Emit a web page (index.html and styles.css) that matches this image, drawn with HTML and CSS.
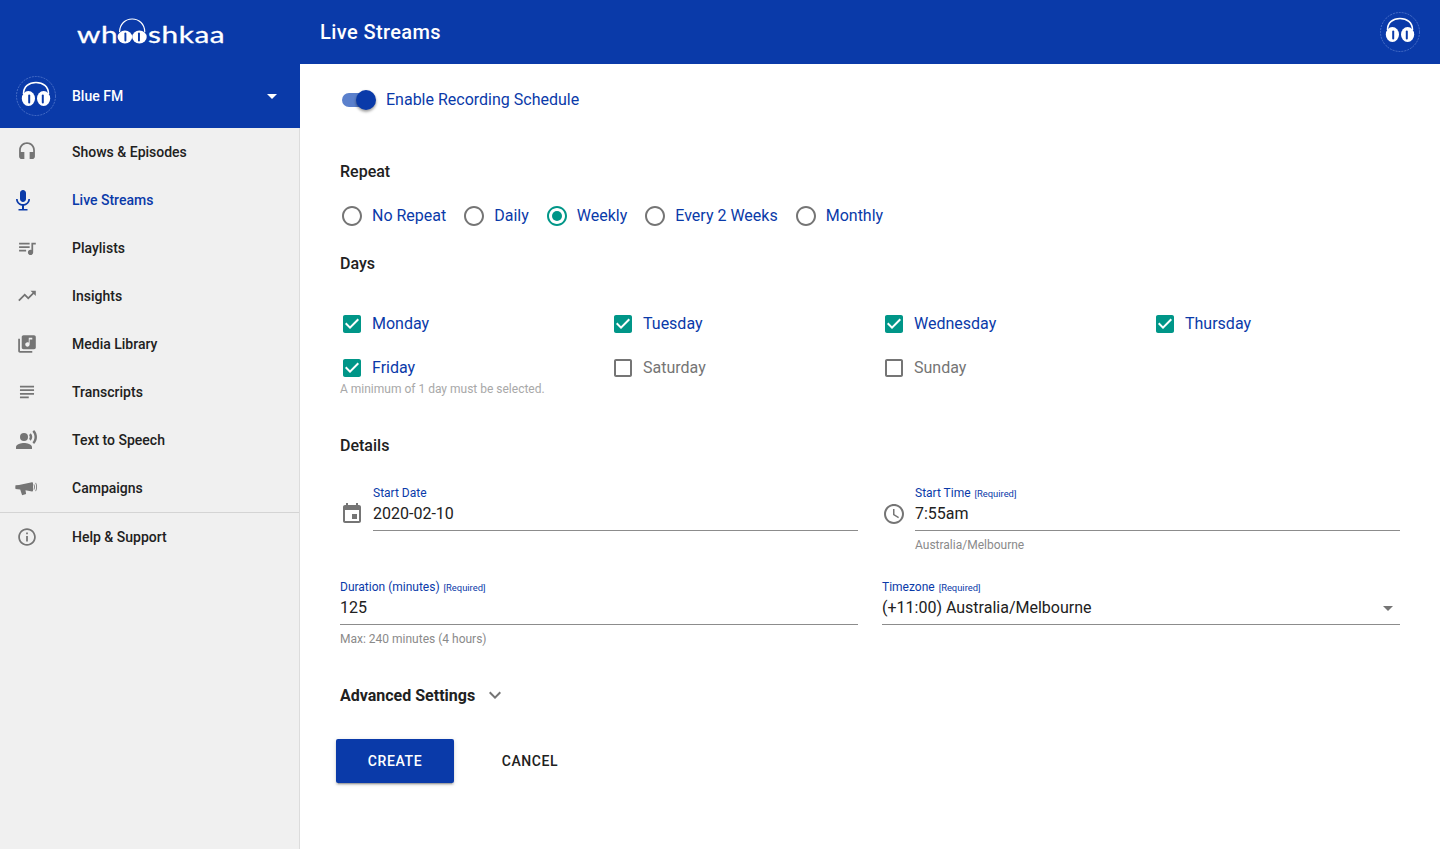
FILE: index.html
```html
<!DOCTYPE html>
<html lang="en">
<head>
<meta charset="utf-8">
<title>Live Streams</title>
<link rel="stylesheet" href="styles.css">
</head>
<body>
<svg class="sprite" width="0" height="0">
  <symbol id="i-headset" viewBox="0 0 24 24"><path d="M12 1c-4.97 0-9 4.03-9 9v7c0 1.66 1.34 3 3 3h3v-8H5v-2c0-3.87 3.13-7 7-7s7 3.13 7 7v2h-4v8h3c1.66 0 3-1.34 3-3v-7c0-4.97-4.03-9-9-9z"/></symbol>
  <symbol id="i-mic" viewBox="0 0 24 24"><path d="M12 14c1.66 0 2.99-1.34 2.99-3L15 5c0-1.66-1.34-3-3-3S9 3.34 9 5v6c0 1.66 1.34 3 3 3zm5.3-3c0 3-2.54 5.1-5.3 5.1S6.7 14 6.7 11H5c0 3.41 2.72 6.23 6 6.72V21H7.500v1.500h9V21H13v-3.280c3.280-.48 6-3.300 6-6.720h-1.700z"/></symbol>
  <symbol id="i-queue" viewBox="0 0 24 24"><path d="M15 6H3v2h12V6zm0 4H3v2h12v-2zM3 16h8v-2H3v2zM17 6v8.180c-.31-.11-.65-.18-1-.18-1.660 0-3 1.340-3 3s1.340 3 3 3 3-1.340 3-3V8h3V6h-5z"/></symbol>
  <symbol id="i-trend" viewBox="0 0 24 24"><path d="M16 6l2.290 2.290-4.880 4.880-4-4L2 16.590 3.410 18l6-6 4 4 6.300-6.290L22 12V6z"/></symbol>
  <symbol id="i-library" viewBox="0 0 24 24"><path d="M20 2H8c-1.100 0-2 .9-2 2v12c0 1.100.9 2 2 2h12c1.100 0 2-.9 2-2V4c0-1.100-.9-2-2-2zm-2 5h-3v5.500c0 1.380-1.120 2.500-2.500 2.500S10 13.880 10 12.500s1.120-2.500 2.500-2.500c.57 0 1.080.19 1.500.51V5h4v2zM4 6H2v14c0 1.100.9 2 2 2h14v-2H4V6z"/></symbol>
  <symbol id="i-notes" viewBox="0 0 24 24"><path d="M14 17H4v2h10v-2zm6-8H4v2h16V9zM4 15h16v-2H4v2zM4 5v2h16V5H4z"/></symbol>
  <symbol id="i-voice" viewBox="0 0 24 24"><circle cx="9" cy="9" r="4"/><path d="M9 15c-2.670 0-8 1.340-8 4v2h16v-2c0-2.660-5.330-4-8-4zm6.760-9.640l-1.680 1.690c.84 1.180.84 2.710 0 3.890l1.680 1.690c2.020-2.020 2.020-5.070 0-7.270zM19.070 2l-1.630 1.630c2.770 3.020 2.770 7.560 0 10.740L19.070 16c3.900-3.890 3.910-9.950 0-14z"/></symbol>
  <symbol id="i-campaign" viewBox="0 0 24 24"><path d="M.5 9.200l3.500-.3L17 6.200c.6-.1 1 .3 1 .8v7.800c0 .5-.4.9-1 .8l-6.500-1.300.6 3.700-4 1.200-1.900-5.700-4.700-.4C.2 11.900.2 10.500.5 9.200zM19.200 8.200c.9 1.700.9 3.900 0 5.600l-.7-.4c.7-1.500.7-3.300 0-4.800zm1.800-1.500c1.400 2.600 1.400 6 0 8.600l-.7-.4c1.200-2.400 1.200-5.400 0-7.800z"/></symbol>
  <symbol id="i-info" viewBox="0 0 24 24"><path d="M11 7h2v2h-2zm0 4h2v6h-2zm1-9C6.480 2 2 6.480 2 12s4.480 10 10 10 10-4.480 10-10S17.520 2 12 2zm0 18c-4.410 0-8-3.590-8-8s3.590-8 8-8 8 3.590 8 8-3.590 8-8 8z"/></symbol>
  <symbol id="i-event" viewBox="0 0 24 24"><path d="M17 12h-5v5h5v-5zM16 1v2H8V1H6v2H5c-1.110 0-1.990.9-1.990 2L3 19c0 1.100.89 2 2 2h14c1.100 0 2-.9 2-2V5c0-1.100-.9-2-2-2h-1V1h-2zm3 18H5V8h14v11z"/></symbol>
  <symbol id="i-clock" viewBox="0 0 24 24"><path d="M11.990 2C6.470 2 2 6.480 2 12s4.470 10 9.990 10C17.520 22 22 17.520 22 12S17.520 2 11.990 2zM12 20c-4.420 0-8-3.580-8-8s3.580-8 8-8 8 3.580 8 8-3.580 8-8 8zm.5-13H11v6l5.250 3.150.75-1.230-4.500-2.670z"/></symbol>
  <symbol id="i-checked" viewBox="0 0 24 24"><path d="M19 3H5c-1.110 0-2 .9-2 2v14c0 1.100.89 2 2 2h14c1.110 0 2-.9 2-2V5c0-1.100-.89-2-2-2zm-9 14l-5-5 1.410-1.410L10 14.170l7.590-7.590L19 8l-9 9z"/></symbol>
  <symbol id="i-unchecked" viewBox="0 0 24 24"><path d="M19 5v14H5V5h14m0-2H5c-1.100 0-2 .9-2 2v14c0 1.100.9 2 2 2h14c1.100 0 2-.9 2-2V5c0-1.100-.9-2-2-2z"/></symbol>
  <symbol id="i-radio" viewBox="0 0 24 24"><path d="M12 2C6.480 2 2 6.480 2 12s4.480 10 10 10 10-4.480 10-10S17.520 2 12 2zm0 18c-4.420 0-8-3.580-8-8s3.580-8 8-8 8 3.580 8 8-3.580 8-8 8z"/></symbol>
  <symbol id="i-radio-on" viewBox="0 0 24 24"><path d="M12 2C6.480 2 2 6.480 2 12s4.480 10 10 10 10-4.480 10-10S17.520 2 12 2zm0 18c-4.420 0-8-3.580-8-8s3.580-8 8-8 8 3.580 8 8-3.580 8-8 8z"/><circle cx="12" cy="12" r="5"/></symbol>
  <symbol id="i-more" viewBox="0 0 24 24"><path d="M16.590 8.590L12 13.170 7.410 8.590 6 10l6 6 6-6z"/></symbol>
  <symbol id="i-drop" viewBox="0 0 24 24"><path d="M7 10l5 5 5-5z"/></symbol>
  <symbol id="i-brand" viewBox="0 0 40 40">
    <circle cx="20" cy="20" r="19.500" fill="none" stroke="#6f8fd8" stroke-width=".6" stroke-dasharray="2 1"/>
    <path d="M7.500 18C7.500 10.500 13 6.500 20 6.500S32.500 10.500 32.500 18" fill="none" stroke="#fff" stroke-width="1.600"/>
    <ellipse cx="12.400" cy="22.500" rx="6.600" ry="7.500" fill="#fff"/>
    <ellipse cx="27.600" cy="22.500" rx="6.600" ry="7.500" fill="#fff"/>
    <rect x="12.200" y="18.500" width="2" height="9" rx="1" fill="#0a3aa9"/>
    <rect x="25.800" y="18.500" width="2" height="9" rx="1" fill="#0a3aa9"/>
  </symbol>
</svg>

<header class="topbar">
  <div class="logo-wrap">
    <div class="logo">
      <span>wh</span>
      <svg class="logo-cups" viewBox="0 0 32 26" preserveAspectRatio="none">
        <path d="M3 14C3 6 9 1 16 1s13 5 13 13" fill="none" stroke="#fff" stroke-width="1.200"/>
        <ellipse cx="8.500" cy="19" rx="7.500" ry="6.500" fill="#fff"/>
        <ellipse cx="23.500" cy="19" rx="7.500" ry="6.500" fill="#fff"/>
        <rect x="8" y="14.500" width="2" height="9" rx="1" fill="#0a3aa9"/>
        <rect x="22" y="14.500" width="2" height="9" rx="1" fill="#0a3aa9"/>
      </svg>
      <span>shkaa</span>
    </div>
  </div>
  <h1 class="page-title">Live Streams</h1>
  <svg class="brand-avatar"><use href="#i-brand"/></svg>
</header>

<div class="layout">
  <aside class="sidebar">
    <div class="station">
      <svg class="brand-avatar"><use href="#i-brand"/></svg>
      <span class="station-name">Blue FM</span>
      <svg class="station-arrow"><use href="#i-drop"/></svg>
    </div>
    <nav class="nav">
      <a class="nav-item"><svg class="nav-icon nav-icon-sm"><use href="#i-headset"/></svg>Shows &amp; Episodes</a>
      <a class="nav-item is-active"><svg class="nav-icon nav-icon-mic"><use href="#i-mic"/></svg>Live Streams</a>
      <a class="nav-item"><svg class="nav-icon nav-icon-sm"><use href="#i-queue"/></svg>Playlists</a>
      <a class="nav-item"><svg class="nav-icon nav-icon-sm"><use href="#i-trend"/></svg>Insights</a>
      <a class="nav-item"><svg class="nav-icon nav-icon-sm"><use href="#i-library"/></svg>Media Library</a>
      <a class="nav-item"><svg class="nav-icon nav-icon-sm"><use href="#i-notes"/></svg>Transcripts</a>
      <a class="nav-item"><svg class="nav-icon"><use href="#i-voice"/></svg>Text to Speech</a>
      <a class="nav-item"><svg class="nav-icon"><use href="#i-campaign"/></svg>Campaigns</a>
    </nav>
    <div class="nav nav-footer">
      <a class="nav-item"><svg class="nav-icon nav-icon-sm"><use href="#i-info"/></svg>Help &amp; Support</a>
    </div>
  </aside>

  <main class="content">
    <div class="toggle-row">
      <span class="switch"><span class="switch-track"></span><span class="switch-thumb"></span></span>
      <span class="blue-label">Enable Recording Schedule</span>
    </div>

    <h2 class="heading heading-repeat">Repeat</h2>
    <div class="radios">
      <label class="choice"><svg class="ctl ctl-off"><use href="#i-radio"/></svg><span class="blue-label">No Repeat</span></label>
      <label class="choice"><svg class="ctl ctl-off"><use href="#i-radio"/></svg><span class="blue-label">Daily</span></label>
      <label class="choice"><svg class="ctl ctl-on"><use href="#i-radio-on"/></svg><span class="blue-label">Weekly</span></label>
      <label class="choice"><svg class="ctl ctl-off"><use href="#i-radio"/></svg><span class="blue-label">Every 2 Weeks</span></label>
      <label class="choice"><svg class="ctl ctl-off"><use href="#i-radio"/></svg><span class="blue-label">Monthly</span></label>
    </div>

    <h2 class="heading heading-days">Days</h2>
    <div class="days">
      <label class="choice"><svg class="ctl ctl-on"><use href="#i-checked"/></svg><span class="blue-label">Monday</span></label>
      <label class="choice"><svg class="ctl ctl-on"><use href="#i-checked"/></svg><span class="blue-label">Tuesday</span></label>
      <label class="choice"><svg class="ctl ctl-on"><use href="#i-checked"/></svg><span class="blue-label">Wednesday</span></label>
      <label class="choice"><svg class="ctl ctl-on"><use href="#i-checked"/></svg><span class="blue-label">Thursday</span></label>
      <label class="choice"><svg class="ctl ctl-on"><use href="#i-checked"/></svg><span class="blue-label">Friday</span></label>
      <label class="choice"><svg class="ctl ctl-off"><use href="#i-unchecked"/></svg><span class="grey-label">Saturday</span></label>
      <label class="choice"><svg class="ctl ctl-off"><use href="#i-unchecked"/></svg><span class="grey-label">Sunday</span></label>
    </div>
    <p class="helper helper-light">A minimum of 1 day must be selected.</p>

    <h2 class="heading heading-details">Details</h2>
    <div class="fields">
      <div class="field-group">
        <svg class="field-icon"><use href="#i-event"/></svg>
        <div class="field">
          <span class="field-label">Start Date</span>
          <span class="field-value">2020-02-10</span>
        </div>
      </div>
      <div class="field-group">
        <svg class="field-icon"><use href="#i-clock"/></svg>
        <div class="field">
          <span class="field-label">Start Time <small class="req">[Required]</small></span>
          <span class="field-value">7:55am</span>
          <p class="helper">Australia/Melbourne</p>
        </div>
      </div>
      <div class="field">
        <span class="field-label">Duration (minutes) <small class="req">[Required]</small></span>
        <span class="field-value">125</span>
        <p class="helper">Max: 240 minutes (4 hours)</p>
      </div>
      <div class="field">
        <span class="field-label">Timezone <small class="req">[Required]</small></span>
        <span class="field-value field-select">(+11:00) Australia/Melbourne<svg class="select-arrow"><use href="#i-drop"/></svg></span>
      </div>
    </div>

    <div class="advanced">
      <span>Advanced Settings</span>
      <svg class="advanced-icon"><use href="#i-more"/></svg>
    </div>

    <div class="actions">
      <button class="btn btn-primary">Create</button>
      <button class="btn btn-text">Cancel</button>
    </div>
  </main>
</div>
</body>
</html>
```
FILE: styles.css
```css
* { box-sizing: border-box; }
html, body { margin: 0; padding: 0; height: 100%; }
body {
  font-family: Roboto, "Liberation Sans", sans-serif;
  color: #212121;
  background: #fff;
  overflow: hidden;
}
.sprite { position: absolute; }

.topbar {
  display: flex;
  align-items: center;
  height: 64px;
  background: #0a3aa9;
  color: #fff;
  padding-right: 20px;
}
.logo-wrap { width: 300px; display: flex; padding-left: 77px; }
.logo {
  display: flex;
  align-items: flex-end;
  font-family: Lato, sans-serif;
  font-size: 24px;
  line-height: 30px;
  height: 30px;
  letter-spacing: 0.5px;
  color: #fff;
  -webkit-text-stroke: 0.3px #fff;
  margin-top: 3px;
  transform: scaleX(1.24);
  transform-origin: left center;
}
.logo-cups { width: 25px; height: 26px; flex: none; margin: 0 0 5px -1px; }
.page-title {
  flex: 1;
  margin: 0;
  font-size: 20px;
  font-weight: 500;
  letter-spacing: 0.4px;
  padding-left: 20px;
}
.brand-avatar { width: 40px; height: 40px; flex: none; }

.layout { display: flex; height: 785px; }
.sidebar {
  width: 300px;
  flex: none;
  background: #f0f0f0;
  border-right: 1px solid #dcdcdc;
}
.station {
  display: flex;
  align-items: center;
  height: 64px;
  background: #0a3aa9;
  color: #fff;
  padding-left: 16px;
  margin-right: -1px;
}
.station-name {
  flex: 1;
  margin-left: 16px;
  font-size: 14px;
  font-weight: 500;
}
.station-arrow { width: 24px; height: 24px; fill: #fff; margin-right: 16px; }
.nav-item {
  display: flex;
  align-items: center;
  height: 48px;
  padding-left: 15px;
  font-size: 14px;
  font-weight: 500;
  color: #212121;
}
.nav-icon {
  width: 24px;
  height: 24px;
  fill: #757575;
  flex: none;
  margin-right: 33px;
}
.nav-icon-sm { transform: scale(0.88); }
.nav-icon-mic { fill: #0a3aa9; transform: translateX(-4px); }
.is-active { color: #0a3aa9; }
.nav-footer { border-top: 1px solid #d4d4d4; }

.content { flex: 1; min-width: 0; padding: 24px 40px 0; }
.toggle-row { display: flex; align-items: center; height: 24px; gap: 10px; }
.switch { position: relative; display: block; width: 36px; height: 24px; }
.switch-track {
  position: absolute;
  left: 2px; top: 5px;
  width: 33px; height: 14px;
  border-radius: 7px;
  background: #5b80cc;
}
.switch-thumb {
  position: absolute;
  left: 16px; top: 2px;
  width: 20px; height: 20px;
  border-radius: 50%;
  background: #0a3aa9;
  box-shadow: 0 2px 3px rgba(0,0,0,.3), 0 1px 3px rgba(0,0,0,.15);
}
.blue-label, .grey-label { font-size: 16px; line-height: 24px; }
.blue-label { color: #0a3aa9; }
.grey-label { color: #757575; }

.heading {
  margin: 0;
  font-size: 16px;
  line-height: 24px;
  font-weight: 500;
  color: #212121;
}
.heading-repeat { margin-top: 48px; }
.heading-days { margin-top: 24px; }
.heading-details { margin-top: 37px; }

.choice { display: flex; align-items: center; gap: 8px; height: 24px; }
.ctl { width: 24px; height: 24px; flex: none; }
.ctl-on { fill: #009688; }
.ctl-off { fill: #757575; }
.radios { display: flex; gap: 16px; margin-top: 20px; }
.days {
  display: grid;
  grid-template-columns: repeat(4, 271px);
  row-gap: 20px;
  margin-top: 36px;
}
.helper {
  margin: 6px 0 0;
  font-size: 12px;
  line-height: 16px;
  color: #8a8a8a;
}
.helper-light { margin-top: 1px; color: #a8a8a8; }

.fields {
  display: grid;
  grid-template-columns: 1fr 1fr;
  column-gap: 24px;
  row-gap: 26px;
  margin-top: 27px;
}
.field-group { display: flex; gap: 9px; }
.field-icon { width: 24px; height: 24px; fill: #757575; flex: none; margin-top: 17px; }
.field { flex: 1; min-width: 0; }
.field-label {
  display: block;
  height: 16px;
  font-size: 12px;
  line-height: 16px;
  color: #0a3aa9;
  white-space: nowrap;
}
.req { font-size: 9.4px; margin-left: 1px; }
.field-value {
  display: block;
  position: relative;
  height: 30px;
  padding-top: 1px;
  font-size: 16px;
  line-height: 24px;
  color: #212121;
  border-bottom: 1px solid #8c8c8c;
}
.select-arrow {
  position: absolute;
  right: 0; top: 1px;
  width: 24px; height: 24px;
  fill: #757575;
}

.advanced {
  display: flex;
  align-items: center;
  gap: 8px;
  height: 24px;
  margin-top: 36px;
  font-size: 16px;
  font-weight: 700;
  color: #212121;
}
.advanced-icon { width: 24px; height: 24px; fill: #757575; }

.actions { display: flex; align-items: center; margin: 32px 0 0 -4px; }
.btn {
  height: 44px;
  border: 0;
  border-radius: 2px;
  font-family: inherit;
  font-size: 14px;
  font-weight: 500;
  letter-spacing: 0.6px;
  text-transform: uppercase;
}
.btn-primary {
  width: 118px;
  background: #0a3aa9;
  color: #fff;
  box-shadow: 0 3px 1px -2px rgba(0,0,0,.2), 0 2px 2px rgba(0,0,0,.14), 0 1px 5px rgba(0,0,0,.12);
}
.btn-text {
  width: 120px;
  margin-left: 16px;
  background: transparent;
  color: #212121;
}
```
